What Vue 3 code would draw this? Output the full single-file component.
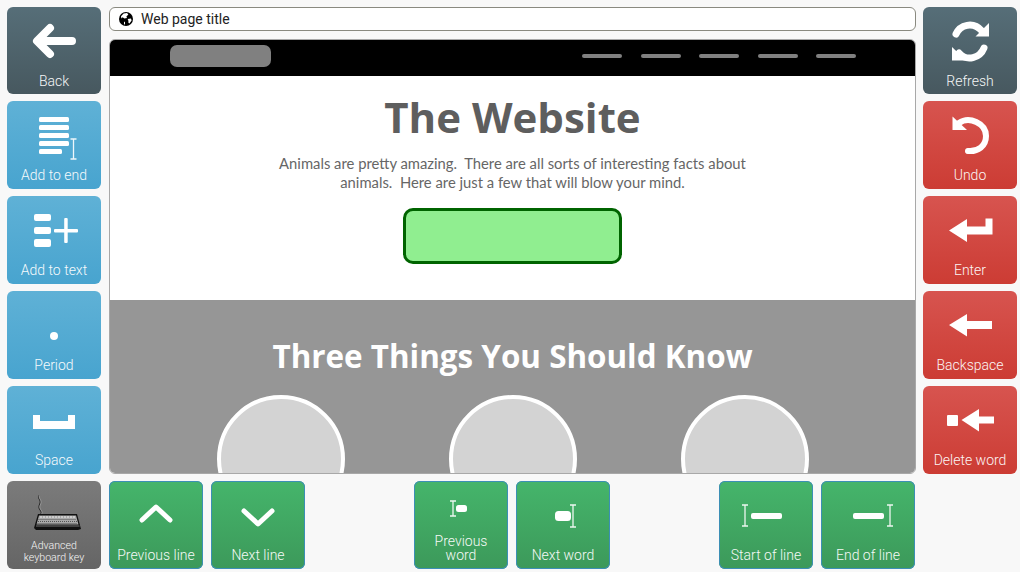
<template>
  <div class="app">
    <div class="side side-left">
      <button v-for="key in leftKeys" :key="key.label" class="key" :class="key.tone" type="button">
        <svg viewBox="0 0 94 62" width="94" height="62" v-html="key.icon" />
        <span class="key-label" :class="{ small: key.small }">{{ key.label }}</span>
      </button>
    </div>

    <div class="center">
      <div class="title-bar">
        <svg class="globe" viewBox="0 0 14 14" width="14" height="14">
          <circle cx="7" cy="7" r="7" fill="#000" />
          <path d="M4.6 1.6 8 1 9.4 2.6 7.4 4.4 8 6 5.4 6.6 3.6 5.2 2.4 6.4 2 4.2Z" fill="#fff" />
          <path d="M8.6 7 12 6.6 12.6 8.4 10.4 11.4 9.4 10.8 9.4 8.8Z" fill="#fff" />
          <path d="M5 9.4 6 10.2 6 12.6 5 12.2Z" fill="#fff" />
        </svg>
        <span>Web page title</span>
      </div>

      <div class="browser">
        <header class="site-header">
          <div class="site-logo" />
          <nav class="site-nav">
            <span v-for="n in 5" :key="n" class="nav-dash" />
          </nav>
        </header>
        <section class="hero">
          <h1>The Website</h1>
          <p>
            Animals are pretty amazing.&nbsp; There are all sorts of interesting facts about<br />
            animals.&nbsp; Here are just a few that will blow your mind.
          </p>
          <div class="cta" />
        </section>
        <section class="things">
          <h2>Three Things You Should Know</h2>
          <div class="circles">
            <div v-for="n in 3" :key="n" class="circle" />
          </div>
        </section>
      </div>

      <div class="bottom-row">
        <div v-for="(group, index) in bottomKeys" :key="index" class="key-group">
          <button v-for="key in group" :key="key.label" class="key green" type="button">
            <svg viewBox="0 0 94 62" width="94" height="62" v-html="key.icon" />
            <span class="key-label">{{ key.label }}</span>
          </button>
        </div>
      </div>
    </div>

    <div class="side side-right">
      <button v-for="key in rightKeys" :key="key.label" class="key" :class="key.tone" type="button">
        <svg viewBox="0 0 94 62" width="94" height="62" v-html="key.icon" />
        <span class="key-label">{{ key.label }}</span>
      </button>
    </div>
  </div>
</template>

<script setup>
const bar = (x, y, w, h, r = 1.5) => `<rect x="${x}" y="${y}" width="${w}" height="${h}" rx="${r}" fill="#fff"/>`
const line = (d, w) =>
  `<path d="${d}" fill="none" stroke="#fff" stroke-width="${w}" stroke-linecap="round" stroke-linejoin="round"/>`
const solid = (d) => `<path d="${d}" fill="#fff"/>`
const beam = (x, y1, y2) =>
  `<path d="M${x} ${y1}V${y2}M${x - 3} ${y1}H${x + 3}M${x - 3} ${y2}H${x + 3}" fill="none" stroke="#fff" stroke-opacity=".9" stroke-width="1.3"/>`

const keyboard = `
  <path d="M32 14c-2 3 2 5 1 8s-2 4 0 7 1 3 0 5" fill="none" stroke="#222" stroke-width="1"/>
  <path d="M32 14c-1 3 3 5 2 8s-2 4 0 7 1 3 0 5" fill="none" stroke="#bbb" stroke-width=".5"/>
  <path d="M31 33H70L74 48 71 49H29L27 47Z" fill="#111"/>
  <path d="M32 34.5H69L71.5 43.5H29.5Z" fill="#aaa"/>
  <path d="M33 36H68" stroke="#eee" stroke-width="1.2" stroke-dasharray="2 1"/>
  <path d="M31.5 38.5H69.5M31 40.5H70M30.5 42.5H70.5" stroke="#555" stroke-width="1.2" stroke-dasharray="1 1"/>
  <path d="M29 45H72.5" stroke="#777" stroke-width="1"/>`

const leftKeys = [
  { label: 'Back', tone: 'slate', icon: line('M65 34H31M43 21 30 34 43 47', 8) },
  {
    label: 'Add to end',
    tone: 'blue',
    icon:
      bar(32, 16, 30, 5) + bar(32, 24, 30, 5) + bar(32, 32, 30, 5) + bar(32, 40, 30, 5) + bar(32, 48, 23, 5) +
      beam(66.5, 38, 58),
  },
  {
    label: 'Add to text',
    tone: 'blue',
    icon:
      bar(27, 18, 17, 7, 2) + bar(27, 31, 17, 7, 2) + bar(27, 43, 17, 8, 2) +
      bar(47, 33, 24, 3.5, 1) + bar(57.2, 22, 3.5, 25, 1),
  },
  { label: 'Period', tone: 'blue', icon: '<circle cx="47" cy="45" r="4" fill="#fff"/>' },
  { label: 'Space', tone: 'blue', icon: solid('M26 29H33V35H61V29H68V43H26Z') },
  { label: 'Advanced keyboard key', tone: 'grey', small: true, icon: keyboard },
]

const rightKeys = [
  {
    label: 'Refresh',
    tone: 'slate',
    icon:
      line('M33 27C37 18 50 14 59 24', 7) + solid('M66 16V29.5H52.5Z') +
      line('M61 41C57 51 44 55 36 46', 7) + solid('M29 40V53.5H43Z'),
  },
  {
    label: 'Undo',
    tone: 'red',
    icon: line('M36 22C46 15 63 22 63 35 63 45 55 51 45 50', 6) + solid('M29.5 15.5V29H44Z'),
  },
  { label: 'Enter', tone: 'red', icon: solid('M26 34.5 44 23V30.5H62.5V22.5H69.5V38.5H44V46Z') },
  { label: 'Backspace', tone: 'red', icon: solid('M26 34 44 23V30H69V38H44V45.5Z') },
  {
    label: 'Delete word',
    tone: 'red',
    icon: bar(24, 29, 11, 11, 1) + solid('M38.5 34 56 23V30.5H71V37.5H56V45.5Z'),
  },
]

const bottomKeys = [
  [
    { label: 'Previous line', icon: line('M33 39 47 26 61 39', 5) },
    { label: 'Next line', icon: line('M33 30 47 43 61 30', 5) },
  ],
  [
    { label: 'Previous word', icon: beam(39, 20, 35) + bar(42, 24, 11, 7, 2.5) },
    { label: 'Next word', icon: bar(39, 30, 16, 10, 3.5) + beam(57, 24, 46) },
  ],
  [
    { label: 'Start of line', icon: beam(26, 24, 45) + bar(32, 32, 31, 6, 2) },
    { label: 'End of line', icon: bar(32, 32, 31, 6, 2) + beam(69, 24, 45) },
  ],
]
</script>

<style scoped>
* {
  box-sizing: border-box;
  margin: 0;
  padding: 0;
}

.app {
  background: #f8f8f8;
  display: flex;
  font-family: 'Open Sans', sans-serif;
  height: 572px;
  padding: 7px 3px 0 7px;
  width: 1020px;
}

.side {
  display: flex;
  flex-direction: column;
  gap: 7px;
  width: 94px;
}

.side-left {
  margin-right: 8px;
}

.side-right {
  margin-left: 7px;
}

.key {
  align-items: end;
  border: 0;
  border-radius: 6px;
  color: #fff;
  display: grid;
  flex: none;
  font-family: Roboto, sans-serif;
  height: 88px;
  justify-items: center;
  padding: 0;
  width: 94px;
}

.side .key:first-child {
  height: 87px;
}

.key > * {
  grid-area: 1 / 1;
}

.key svg {
  align-self: start;
  display: block;
}

.key-label {
  font-size: 14px;
  font-weight: 300;
  line-height: 14px;
  opacity: 0.95;
  padding: 0 6px 7px;
  text-align: center;
}

.side .key:first-child .key-label {
  padding-bottom: 6px;
}

.key-label.small {
  font-size: 10.6px;
  line-height: 11.5px;
  padding: 0 4px 6px;
}

.slate {
  background: linear-gradient(#566e78, #47585f);
}

.blue {
  background: linear-gradient(#5fb1d6, #48a4cf);
}

.red {
  background: linear-gradient(#d7544f, #cc3c34);
}

.grey {
  background: linear-gradient(#7b7b7b, #656565);
}

.green {
  background: linear-gradient(#45b56b, #3c995a);
  box-shadow: inset 0 0 0 1px #3c8fb5;
}

.center {
  display: flex;
  flex-direction: column;
  width: 807px;
}

.title-bar {
  align-items: center;
  background: #fff;
  border: 1px solid #8a8a80;
  border-radius: 6px;
  color: #222;
  display: flex;
  font-family: Roboto, sans-serif;
  font-size: 14px;
  gap: 8px;
  height: 24px;
  padding-left: 9px;
}

.globe {
  flex: none;
}

.browser {
  background: #fff;
  border: 1px solid #a8a8a8;
  border-radius: 6px;
  height: 435px;
  margin-top: 8px;
  overflow: hidden;
}

.site-header {
  align-items: center;
  background: #000;
  display: flex;
  height: 36px;
  justify-content: space-between;
  padding: 0 59px 4px 60px;
}

.site-logo {
  background: #808080;
  border-radius: 7px;
  height: 22px;
  width: 101px;
}

.site-nav {
  display: flex;
  gap: 18.5px;
}

.nav-dash {
  background: #808080;
  border-radius: 2px;
  height: 4px;
  width: 40px;
}

.hero {
  align-items: center;
  display: flex;
  flex-direction: column;
  height: 224px;
}

.hero h1 {
  color: #5e5e5e;
  font-size: 42px;
  font-weight: 700;
  line-height: 60px;
  margin-top: 11px;
}

.hero p {
  color: #666;
  font-family: Lato, sans-serif;
  font-size: 14.8px;
  line-height: 19px;
  margin-top: 7px;
  text-align: center;
}

.cta {
  background: #90ee90;
  border: 3px solid #006400;
  border-radius: 10px;
  height: 56px;
  margin-top: 16px;
  width: 219px;
}

.things {
  align-items: center;
  background: #969696;
  display: flex;
  flex-direction: column;
  height: 175px;
  overflow: hidden;
}

.things h2 {
  color: #fff;
  font-size: 31.4px;
  font-weight: 700;
  line-height: 44px;
  margin-top: 34px;
}

.circles {
  display: flex;
  gap: 104px;
  margin-top: 17px;
}

.circle {
  background: #d3d3d3;
  border: 4px solid #fff;
  border-radius: 50%;
  flex: none;
  height: 128px;
  width: 128px;
}

.bottom-row {
  display: flex;
  justify-content: space-between;
  margin-top: 7px;
  padding-right: 1px;
}

.key-group {
  display: flex;
  gap: 8px;
}
</style>

<style>
html,
body {
  background: #fff;
}
</style>
